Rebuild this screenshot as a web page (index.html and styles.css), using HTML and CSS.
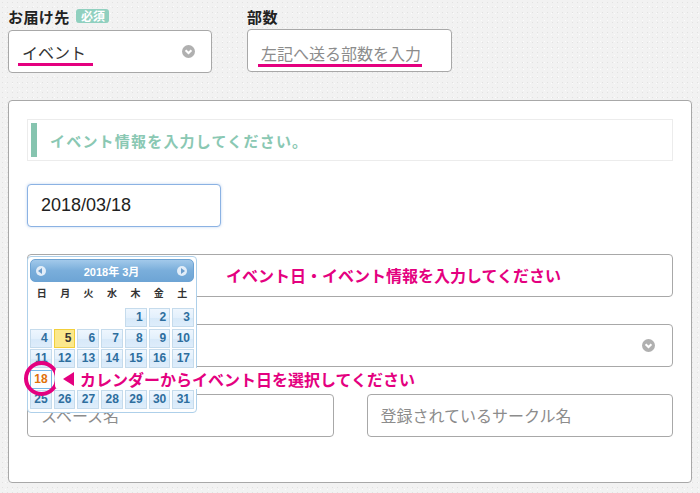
FILE: index.html
```html
<!DOCTYPE html>
<html lang="ja">

<head>
    <meta charset="UTF-8">
    <meta name="viewport" content="width=device-width, initial-scale=1.0">
    <title>イベント情報</title>
    <link rel="stylesheet" href="styles.css">
</head>

<body>
    <div class="top-row">
        <div class="field field-dest">
            <div class="label">お届け先 <span class="badge">必須</span></div>
            <div class="box select">
                <span class="mark mark-dest">イベント</span>
                <svg class="chevron" width="13" height="13" viewBox="0 0 12 12">
                    <circle cx="6" cy="6" r="6" fill="#b0b0b0" />
                    <path d="M3.3 4.8 L6 7.4 L8.7 4.8" fill="none" stroke="#fff" stroke-width="1.9" />
                </svg>
            </div>
        </div>
        <div class="field field-count">
            <div class="label">部数</div>
            <div class="box count">
                <span class="mark mark-count placeholder">左記へ送る部数を入力</span>
            </div>
        </div>
    </div>

    <div class="panel">
        <div class="info"><span class="info-bar"></span>イベント情報を入力してください。</div>

        <div class="row">
            <div class="box date">2018/03/18</div>
        </div>
        <div class="row">
            <div class="box wide note">イベント日・イベント情報を入力してください</div>
        </div>
        <div class="row">
            <div class="box wide select-wide">
                <span></span>
                <svg class="chevron" width="13" height="13" viewBox="0 0 12 12">
                    <circle cx="6" cy="6" r="6" fill="#b0b0b0" />
                    <path d="M3.3 4.8 L6 7.4 L8.7 4.8" fill="none" stroke="#fff" stroke-width="1.9" />
                </svg>
            </div>
        </div>
        <div class="row pair">
            <div class="box half placeholder">スペース名</div>
            <div class="box half placeholder">登録されているサークル名</div>
        </div>

        <!-- datepicker popup -->
        <div class="calendar">
            <div class="cal-head">
                <span class="cal-btn prev"></span>
                <span class="cal-title">2018年 3月</span>
                <span class="cal-btn next"></span>
            </div>
            <div class="cal-dow">
                <span>日</span><span>月</span><span>火</span><span>水</span><span>木</span><span>金</span><span>土</span>
            </div>
            <div class="cal-grid">
                <span class="empty"></span><span class="empty"></span><span class="empty"></span><span class="empty"></span>
                <span class="day">1</span><span class="day">2</span><span class="day">3</span>
                <span class="day">4</span><span class="day today">5</span><span class="day">6</span><span class="day">7</span>
                <span class="day">8</span><span class="day">9</span><span class="day">10</span>
                <span class="day">11</span><span class="day">12</span><span class="day">13</span><span class="day">14</span>
                <span class="day">15</span><span class="day">16</span><span class="day">17</span>
                <!-- 19-24 sit under the callout -->
                <span class="day active">18</span><span class="day"></span><span class="day"></span><span class="day"></span>
                <span class="day"></span><span class="day"></span><span class="day"></span>
                <span class="day">25</span><span class="day">26</span><span class="day">27</span><span class="day">28</span>
                <span class="day">29</span><span class="day">30</span><span class="day">31</span>
            </div>
        </div>

        <span class="ring"></span>
        <div class="callout"><span class="arrow"></span>カレンダーからイベント日を選択してください</div>
    </div>
</body>

</html>
```

FILE: styles.css
```css
* {
    box-sizing: border-box;
}

body {
    margin: 0;
    padding: 7px 8px 0;
    font-family: "Noto Sans CJK JP", sans-serif;
    color: #222;
    background-color: #f2f2f2;
    background-image:
        radial-gradient(#e2e2e2 0.6px, transparent 0.9px),
        radial-gradient(#fcfcfc 0.6px, transparent 0.9px);
    background-size: 5px 5px, 7px 7px;
    background-position: 0 0, 2px 3px;
}

.top-row {
    display: flex;
    gap: 35px;
}

.field-dest {
    width: 204px;
}

.field-count {
    width: 205px;
}

.label {
    height: 20px;
    line-height: 20px;
    margin-bottom: 3px;
    font-size: 15px;
    font-weight: bold;
    letter-spacing: 0.4px;
    color: #222;
}

.field-count .label {
    margin-bottom: 2px;
}

.badge {
    display: inline-block;
    width: 33px;
    height: 14px;
    margin-left: 3px;
    line-height: 14px;
    border-radius: 3px;
    background: #90d0bf;
    color: #fff;
    font-size: 12px;
    font-weight: bold;
    letter-spacing: 0;
    text-align: center;
    vertical-align: 2px;
}

.box {
    height: 43px;
    border: 1px solid #a8a8a8;
    border-radius: 4px;
    background: #fff;
    font-size: 16px;
}

.select {
    display: flex;
    justify-content: space-between;
    align-items: flex-start;
    padding: 11px 16px 0 13px;
}

.count {
    padding: 11px 0 0 13px;
}

.chevron {
    display: block;
    align-self: center;
}

.select .chevron {
    margin-top: -11px;
}

.mark {
    display: inline-block;
    line-height: 21px;
    border-bottom: 3px solid #e4007f;
}

.mark-dest {
    margin-left: -4px;
    padding: 0 7px 0 4px;
    color: #333;
}

.mark-count {
    margin-left: -3px;
    padding: 0 1px 0 3px;
}

.placeholder {
    color: #8c8c8c;
}

.panel {
    position: relative;
    margin-top: 27px;
    padding: 18px;
    border: 1px solid #a8a8a8;
    border-radius: 4px;
    background: #fff;
}

.info {
    display: flex;
    align-items: center;
    height: 42px;
    margin-bottom: 23px;
    padding: 3px;
    border: 1px solid #ececec;
    color: #8ac8b3;
    font-size: 15px;
    font-weight: bold;
    letter-spacing: 1.2px;
}

.info-bar {
    align-self: stretch;
    width: 6px;
    margin-right: 13px;
    background: #86c4af;
}

.row {
    margin-bottom: 27px;
}

.date {
    width: 194px;
    padding-left: 13px;
    line-height: 41px;
    border-color: #8bb2e3;
    box-shadow: 0 0 3px rgba(110, 160, 225, 0.45);
    font-family: "Liberation Sans", sans-serif;
    font-size: 18px;
    color: #222;
}

.note {
    padding-left: 198px;
    line-height: 41px;
    color: #e4007f;
    font-weight: bold;
}

.select-wide {
    display: flex;
    justify-content: space-between;
    align-items: center;
    padding: 0 17px 0 13px;
}

.pair {
    display: grid;
    grid-template-columns: 1fr 1fr;
    gap: 33px;
}

.half {
    padding-left: 13px;
    line-height: 41px;
}

/* datepicker */
.calendar {
    position: absolute;
    left: 18px;
    top: 155px;
    width: 170px;
    height: 157px;
    padding: 2px;
    border: 1px solid #aed0ea;
    border-radius: 4px;
    background: #fff;
    font-family: "Liberation Sans", "Noto Sans CJK JP", sans-serif;
}

.cal-head {
    display: flex;
    align-items: center;
    justify-content: space-between;
    height: 23px;
    padding: 0 6px 0 5px;
    border: 1px solid #6ea4d4;
    border-radius: 5px;
    background: linear-gradient(#a2c9ea, #7aaedb 50%, #6ea5d5);
    color: #fff;
    font-size: 11px;
    font-weight: bold;
}

.cal-btn {
    width: 10px;
    height: 10px;
    border-radius: 50%;
    background: #e2edf8;
    position: relative;
}

.cal-btn::after {
    content: "";
    position: absolute;
    top: 2px;
    border-top: 3px solid transparent;
    border-bottom: 3px solid transparent;
}

.prev::after {
    left: 2px;
    border-right: 4px solid #6b9dcc;
}

.next::after {
    left: 4px;
    border-left: 4px solid #6b9dcc;
}

.cal-dow {
    display: grid;
    grid-template-columns: repeat(7, 1fr);
    height: 22px;
    margin: 1px 0 3px;
    line-height: 22px;
    text-align: center;
    font-size: 10px;
    font-weight: bold;
    color: #333;
}

.cal-grid {
    display: grid;
    grid-template-columns: repeat(7, 1fr);
    grid-auto-rows: 19px;
    gap: 1.5px 2px;
}

.day {
    padding-right: 3px;
    line-height: 17px;
    text-align: right;
    font-size: 12px;
    font-weight: bold;
    color: #2e6e9e;
    border: 1px solid #c5dbec;
    background: linear-gradient(#eef6fe, #e3f0fc 50%, #d7e9f9 52%, #deedfb);
}

.day.today {
    border-color: #f2cf3a;
    background: #fbe88c;
    color: #363636;
}

.day.active {
    border-color: #79b7e7;
    background: #fbfdff;
    color: #e17009;
}

/* annotations */
.ring {
    position: absolute;
    left: 15px;
    top: 260px;
    width: 35px;
    height: 35px;
    border: 4px solid #e4007f;
    border-radius: 50%;
}

.callout {
    position: absolute;
    left: 46px;
    top: 267px;
    display: flex;
    align-items: center;
    height: 21px;
    padding: 0 6px 0 8px;
    border-radius: 4px;
    background: #fff;
    color: #e4007f;
    font-size: 16px;
    font-weight: bold;
}

.arrow {
    width: 0;
    height: 0;
    margin-right: 6px;
    border-top: 7px solid transparent;
    border-bottom: 7px solid transparent;
    border-right: 11px solid #e4007f;
}
```
